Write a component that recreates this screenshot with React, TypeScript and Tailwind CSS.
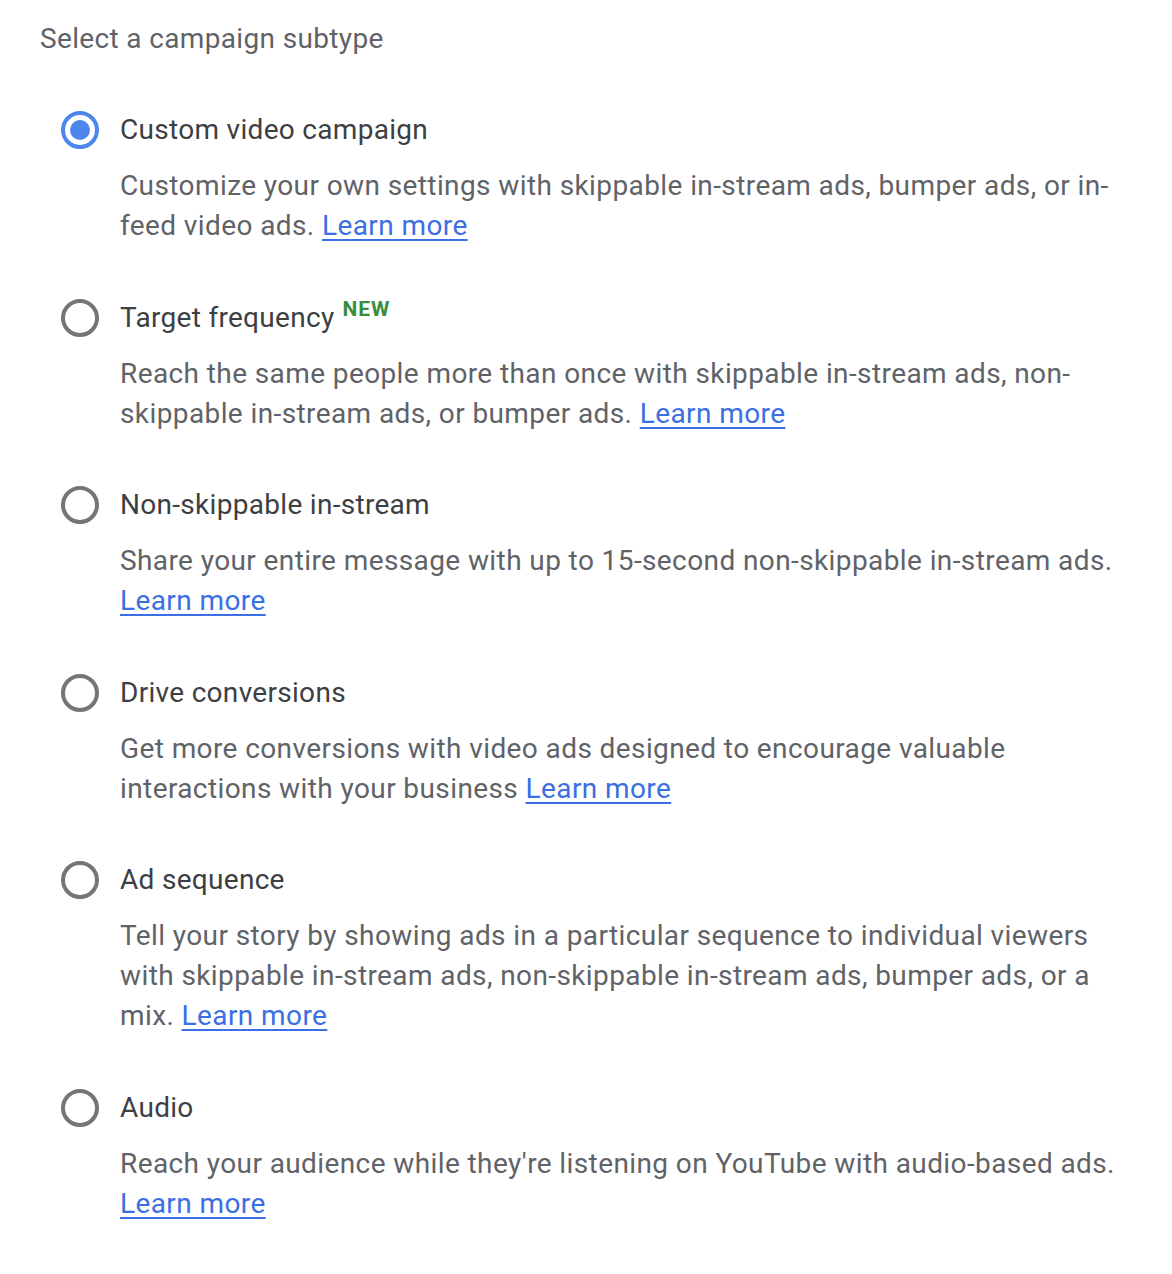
import { useState } from 'react';

type Subtype = {
  id: string;
  label: string;
  isNew?: boolean;
  desc: string;
};

const SUBTYPES: Subtype[] = [
  { id: 'custom', label: 'Custom video campaign', desc: 'Customize your own settings with skippable in-stream ads, bumper ads, or in-feed video ads.' },
  { id: 'frequency', label: 'Target frequency', isNew: true, desc: 'Reach the same people more than once with skippable in-stream ads, non-skippable in-stream ads, or bumper ads.' },
  { id: 'nonskip', label: 'Non-skippable in-stream', desc: 'Share your entire message with up to 15-second non-skippable in-stream ads.' },
  { id: 'conversions', label: 'Drive conversions', desc: 'Get more conversions with video ads designed to encourage valuable interactions with your business' },
  { id: 'sequence', label: 'Ad sequence', desc: 'Tell your story by showing ads in a particular sequence to individual viewers with skippable in-stream ads, non-skippable in-stream ads, bumper ads, or a mix.' },
  { id: 'audio', label: 'Audio', desc: "Reach your audience while they're listening on YouTube with audio-based ads." },
];

function Radio({ checked }: { checked: boolean }) {
  return (
    <span className="w-10 h-10 shrink-0 flex items-center justify-center">
      <span className={`w-[38px] h-[38px] rounded-full border-4 flex items-center justify-center ${checked ? 'border-[#4f86ec]' : 'border-[#757575]'}`}>
        {checked && <span className="w-5 h-5 rounded-full bg-[#4f86ec]" />}
      </span>
    </span>
  );
}

export default function App() {
  const [selected, setSelected] = useState('custom');
  return (
    <div className="min-h-screen bg-white pl-10 pr-8 pt-5 pb-10" style={{ fontFamily: 'Roboto, "Noto Sans", sans-serif' }}>
      <h2 className="text-[28px] leading-9 pt-px text-[#5f6368] tracking-[0.35px]">Select a campaign subtype</h2>

      <div className="mt-[53px] pl-5 flex flex-col gap-[51.6px]">
        {SUBTYPES.map(s => (
          <div key={s.id}>
            <button onClick={() => setSelected(s.id)} className="flex items-center gap-5 text-left">
              <Radio checked={selected === s.id} />
              <span className="text-[28px] leading-10 text-[#3c4043] tracking-[0.3px]">
                {s.label}
                {s.isNew && (
                  <span className="ml-2 align-super text-[21px] leading-none font-bold text-[#388e3c] tracking-[1px]">NEW</span>
                )}
              </span>
            </button>
            <p className="mt-4 pl-[60px] text-[28px] leading-10 text-[#5f6368] tracking-[0.4px]">
              {s.desc}{' '}
              <a href="#" className="whitespace-nowrap text-[#3b6fe3] underline decoration-2 underline-offset-4">Learn more</a>
            </p>
          </div>
        ))}
      </div>
    </div>
  );
}
